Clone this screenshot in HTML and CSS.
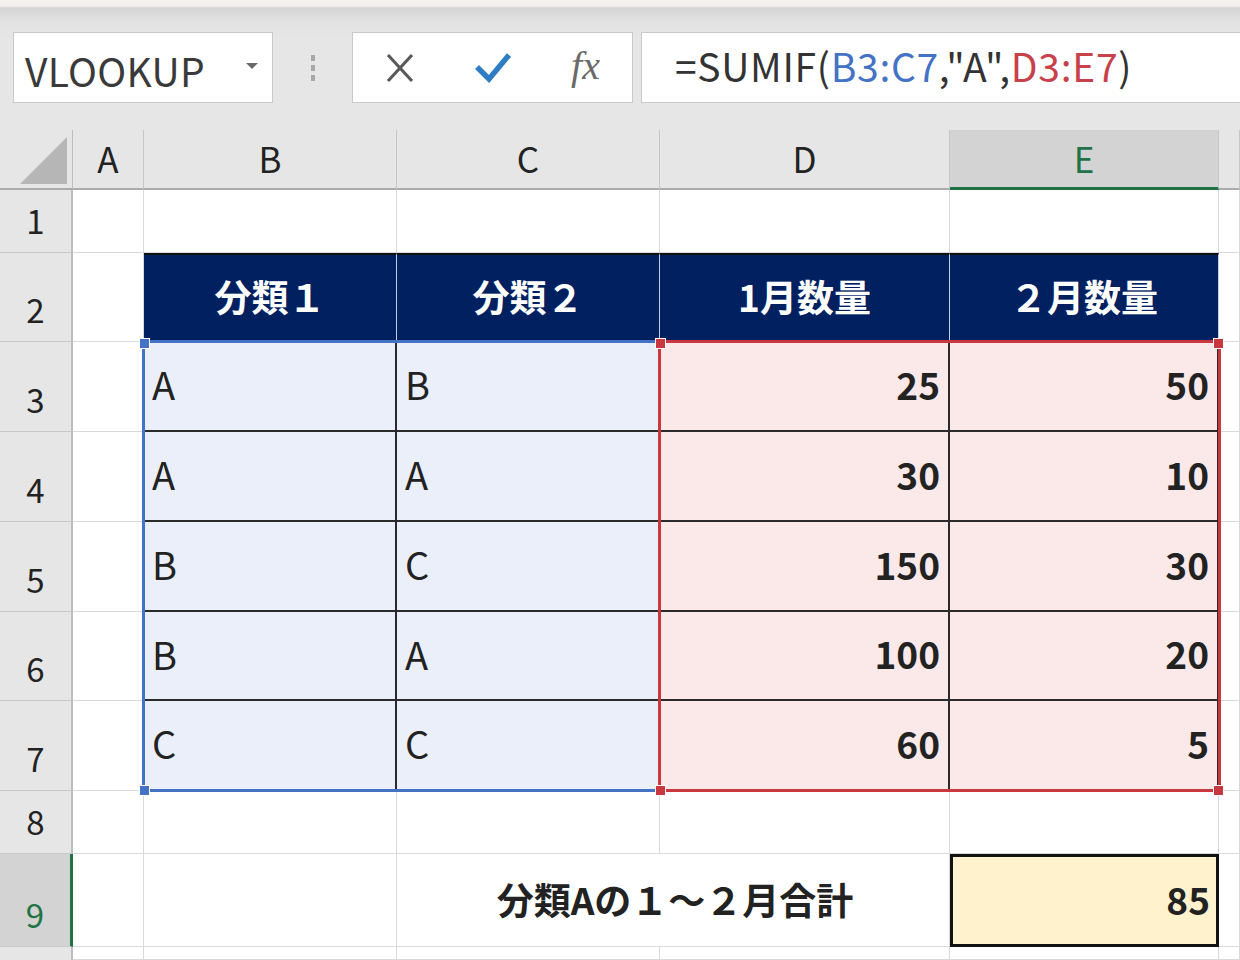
FILE: index.html
```html
<!DOCTYPE html>
<html>
<head>
<meta charset="utf-8">
<title>SUMIF</title>
<link rel="stylesheet" href="styles.css">
</head>
<body>
<div class="toolbar">
	<div class="namebox"><span class="name">VLOOKUP</span><span class="caret"></span></div>
	<div class="grip"><i></i><i></i><i></i></div>
	<div class="btnbox">
		<span class="btn">
			<svg width="30" height="32" viewBox="0 0 30 32"><path d="M3 3 L27 29 M27 3 L3 29" stroke="#5a5a5a" stroke-width="3.2" fill="none"/></svg>
		</span>
		<span class="btn">
			<svg width="36" height="30" viewBox="0 0 36 30"><path d="M2 14 L14 26 L34 2" stroke="#2f7dc3" stroke-width="5.5" fill="none" stroke-linejoin="miter"/></svg>
		</span>
		<span class="btn fx">fx</span>
	</div>
	<div class="formula">=SUMIF(<span class="ref-b">B3:C7</span>,"A",<span class="ref-r">D3:E7</span>)</div>
</div>

<div class="sheet">
	<!-- 列見出し -->
	<div class="c corner"><svg width="47" height="47" viewBox="0 0 47 47"><polygon points="47,0 47,47 0,47" fill="#b6b6b6"/></svg></div>
	<div class="c ch">A</div>
	<div class="c ch">B</div>
	<div class="c ch">C</div>
	<div class="c ch">D</div>
	<div class="c ch sel">E</div>
	<div class="c ch"></div>

	<!-- 1 -->
	<div class="c rh">1</div>
	<div class="c"></div><div class="c"></div><div class="c"></div><div class="c"></div><div class="c"></div><div class="c"></div>

	<!-- 2 -->
	<div class="c rh">2</div>
	<div class="c"></div>
	<div class="c th">分類１</div>
	<div class="c th">分類２</div>
	<div class="c th">1月数量</div>
	<div class="c th">２月数量</div>
	<div class="c"></div>

	<!-- 3 -->
	<div class="c rh">3</div>
	<div class="c"></div>
	<div class="c lb txt">A</div>
	<div class="c lb txt">B</div>
	<div class="c lr num">25</div>
	<div class="c lr num">50</div>
	<div class="c"></div>

	<!-- 4 -->
	<div class="c rh">4</div>
	<div class="c"></div>
	<div class="c lb txt">A</div>
	<div class="c lb txt">A</div>
	<div class="c lr num">30</div>
	<div class="c lr num">10</div>
	<div class="c"></div>

	<!-- 5 -->
	<div class="c rh">5</div>
	<div class="c"></div>
	<div class="c lb txt">B</div>
	<div class="c lb txt">C</div>
	<div class="c lr num">150</div>
	<div class="c lr num">30</div>
	<div class="c"></div>

	<!-- 6 -->
	<div class="c rh">6</div>
	<div class="c"></div>
	<div class="c lb txt">B</div>
	<div class="c lb txt">A</div>
	<div class="c lr num">100</div>
	<div class="c lr num">20</div>
	<div class="c"></div>

	<!-- 7 -->
	<div class="c rh">7</div>
	<div class="c"></div>
	<div class="c lb txt">C</div>
	<div class="c lb txt">C</div>
	<div class="c lr num">60</div>
	<div class="c lr num">5</div>
	<div class="c"></div>

	<!-- 8 -->
	<div class="c rh">8</div>
	<div class="c"></div><div class="c"></div><div class="c"></div><div class="c"></div><div class="c"></div><div class="c"></div>

	<!-- 9 -->
	<div class="c rh sel">9</div>
	<div class="c"></div>
	<div class="c"></div>
	<div class="c label">分類Aの１～２月合計</div>
	<div class="c total">85</div>
	<div class="c"></div>

	<!-- 10 -->
	<div class="c rh"></div>
	<div class="c"></div><div class="c"></div><div class="c"></div><div class="c"></div><div class="c"></div><div class="c"></div>

	<!-- 参照範囲の枠 -->
	<div class="range blue"></div>
	<div class="range red"></div>
	<span class="handle blue" style="left:140px;top:209px"></span>
	<span class="handle blue" style="left:140px;top:656px"></span>
	<span class="handle red" style="left:656px;top:209px"></span>
	<span class="handle red" style="left:1214px;top:209px"></span>
	<span class="handle red" style="left:656px;top:656px"></span>
	<span class="handle red" style="left:1214px;top:656px"></span>
</div>
</body>
</html>
```

FILE: styles.css
```css
*
{
	box-sizing:border-box;
}
body
{
	margin:0;
	width:1240px;
	height:960px;
	overflow:hidden;
	background-color:#ffffff;
	font-family:"Noto Sans CJK JP","Noto Sans",sans-serif;
	color:#222222;
}

/* 数式バー */
.toolbar
{
	height:130px;
	display:flex;
	align-items:flex-start;
	padding:32px 0 0 13px;
	background:linear-gradient(#f6f3ef 0px,#f3f0ec 6px,#d4d4d4 8px,#e3e3e3 22px,#e6e6e6 40px);
}
.namebox
{
	width:260px;
	height:71px;
	background-color:#ffffff;
	border:1px solid #c9c9c9;
	display:flex;
	align-items:center;
	justify-content:space-between;
	padding:5px 14px 0 11px;
}
.name
{
	font-size:39px;
	color:#3a3a3a;
	letter-spacing:0.3px;
}
.caret
{
	width:0;
	height:0;
	border-left:6px solid transparent;
	border-right:6px solid transparent;
	border-top:6px solid #6a6a6a;
	margin-bottom:8px;
}
.grip
{
	width:79px;
	height:71px;
	display:flex;
	flex-direction:column;
	align-items:center;
	justify-content:center;
	gap:4px;
}
.grip i
{
	display:block;
	width:4px;
	height:6px;
	background-color:#a8a8a8;
}
.btnbox
{
	width:281px;
	height:71px;
	background-color:#ffffff;
	border:1px solid #c9c9c9;
	display:flex;
	align-items:center;
}
.btn
{
	flex:1;
	display:flex;
	justify-content:center;
	align-items:center;
}
.fx
{
	font-family:"Liberation Serif",serif;
	font-style:italic;
	font-size:40px;
	color:#6a6a6a;
	padding-bottom:4px;
}
.formula
{
	flex:1;
	height:71px;
	margin-left:8px;
	background-color:#ffffff;
	border:1px solid #c9c9c9;
	border-right:none;
	display:flex;
	align-items:center;
	padding:0 0 6px 33px;
	font-size:39px;
	color:#333333;
	letter-spacing:0.7px;
}
.ref-b
{
	color:#4472c4;
}
.ref-r
{
	color:#c7414a;
}

/* シート */
.sheet
{
	position:relative;
	display:grid;
	grid-template-columns:73px 71px 253px 263px 290px 269px 21px;
	grid-template-rows:60px 63px 89px 90px 90px 90px 89px 90px 63px 93px 13px;
}
.c
{
	border-right:1px solid #d9d9d9;
	border-bottom:1px solid #d9d9d9;
	display:flex;
	align-items:center;
	overflow:hidden;
}
.corner
{
	background-color:#e6e6e6;
	border-right:1px solid #bdbdbd;
	border-bottom:2px solid #ababab;
	justify-content:flex-end;
	align-items:flex-end;
	padding:0 5px 4px 0;
}
.ch
{
	background-color:#e6e6e6;
	border-right:1px solid #c6c6c6;
	border-bottom:2px solid #ababab;
	justify-content:center;
	font-size:35px;
	padding-bottom:3px;
}
.rh
{
	background-color:#e6e6e6;
	border-right:2px solid #bdbdbd;
	border-bottom:1px solid #c8c8c8;
	justify-content:center;
	align-items:flex-end;
	font-size:33px;
	line-height:32px;
	padding-bottom:16px;
}
.ch.sel
{
	background-color:#d3d3d3;
	color:#217346;
	border-bottom:3px solid #217346;
}
.rh.sel
{
	background-color:#d3d3d3;
	color:#217346;
	border-right:3px solid #217346;
}
.th
{
	background-color:#002060;
	color:#ffffff;
	font-weight:bold;
	font-size:37px;
	justify-content:center;
	border-top:2px solid #111111;
	border-right:1px solid #c3cde4;
	border-bottom:none;
	padding-bottom:5px;
}
.lb
{
	background-color:#eaeff9;
	border-right:2px solid #2a2a2a;
	border-bottom:2px solid #2a2a2a;
}
.lr
{
	background-color:#fbe9ea;
	border-right:2px solid #2a2a2a;
	border-bottom:2px solid #2a2a2a;
}
.txt
{
	font-size:38px;
	padding:0 0 5px 8px;
}
.num
{
	font-size:37px;
	font-weight:bold;
	justify-content:flex-end;
	padding:0 8px 5px 0;
}
.label
{
	grid-column:span 2;
	justify-content:center;
	font-size:37px;
	font-weight:bold;
	padding:0 0 3px 4px;
}
.total
{
	background-color:#fff2cc;
	border:3px solid #111111;
	justify-content:flex-end;
	padding:0 6px 3px 0;
	font-size:37px;
	font-weight:bold;
}

/* 参照範囲 */
.range
{
	position:absolute;
	top:210px;
	height:452px;
	border:3px solid;
}
.range.blue
{
	left:142px;
	width:519px;
	border-color:#4472c4;
}
.range.red
{
	left:658px;
	width:563px;
	border-color:#c9373f;
}
.handle
{
	position:absolute;
	width:9px;
	height:9px;
	box-shadow:0 0 0 1px #ffffff;
}
.handle.blue
{
	background-color:#4472c4;
}
.handle.red
{
	background-color:#c9373f;
}
```
